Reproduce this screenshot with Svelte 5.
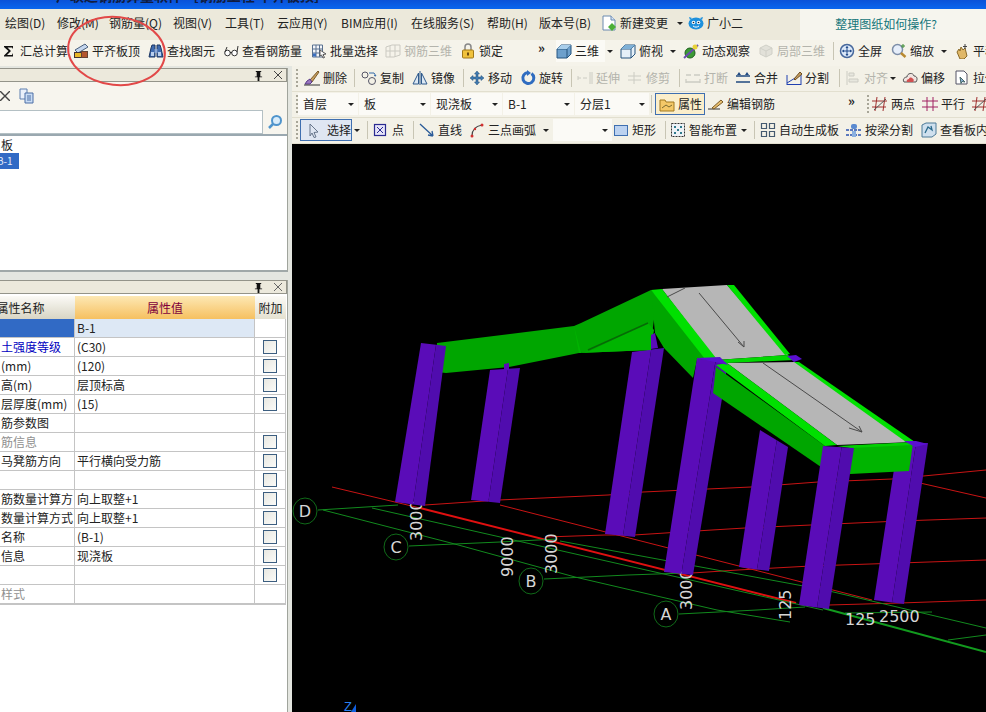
<script>
  const icons = {
    sigma: '<path d="M3 3h9v3l-1-1.500H6.500l3.500 3.500-4 4h5l1-2v3.500H3v-1l4.500-4.500L3 4z" fill="#111"/>',
    flat: '<path d="M2 7L12 1l3 3L5 10z" fill="#c4d6ee" stroke="#4a5f7c"/><rect x="1.500" y="9.500" width="7" height="5" fill="#e8b828" stroke="#433"/><rect x="8.500" y="8.500" width="6" height="6" fill="#b4562e" stroke="#643"/>',
    binoc: '<path d="M1 14l2-9 1-3h3v12H1zM9 14V2h3l1 3 2 9z" fill="#3f6bb0" stroke="#1d3763"/><rect x="6.500" y="6" width="3" height="4" fill="#8aa8d8"/><rect x="3" y="9" width="3" height="4" fill="#b9cfee"/><rect x="10" y="9" width="3" height="4" fill="#b9cfee"/>',
    glasses: '<circle cx="4.500" cy="10" r="2.800" fill="#fff" stroke="#333"/><circle cx="11.500" cy="10" r="2.800" fill="#fff" stroke="#333"/><path d="M7 9.500h2M2 9l2-5M14 9l1-6" stroke="#333" fill="none"/>',
    batch: '<path d="M1.500 2h10v12h-10zM1.500 6h10M1.500 10h10M5 2v12M8.500 2v12" fill="#f4f6fa" stroke="#58708f"/><rect x="2" y="10.500" width="3" height="3" fill="#3a6fc0"/><path d="M9 7l6 4-3 .5 1.500 3-1.500.5-1.500-3L9 13z" fill="#fff" stroke="#555"/>',
    rebar3d: '<path d="M1 4l6-2h8v10l-6 2H1zM1 8h14M5 3v11M10 2v12" fill="none" stroke="#bdbdb5"/>',
    lock: '<path d="M5 7V4a3 3 0 016 0v3" fill="none" stroke="#888" stroke-width="1.500"/><rect x="2.500" y="7" width="11" height="8" rx="1" fill="#f0c23c" stroke="#a07818"/><rect x="7" y="9.500" width="2" height="3" fill="#6a4a10"/>',
    cube: '<path d="M1 6l4-4h10v9l-4 4H1z" fill="#6da0cc" stroke="#27557f"/><path d="M1 6h10v9M11 6l4-4" fill="none" stroke="#27557f"/><path d="M1 6l4-4h10l-4 4z" fill="#a8cdea"/>',
    cubeTop: '<path d="M1 6l4-4h10v9l-4 4H1z" fill="#e6f0f8" stroke="#27557f"/><path d="M1 6h10v9M11 6l4-4" fill="none" stroke="#27557f"/><path d="M1 6l4-4h10l-4 4z" fill="#7fb0d6"/>',
    orbit: '<circle cx="7" cy="10" r="5" fill="#3c9a36" stroke="#1f5f1d"/><path d="M1 15L15 2" stroke="#6a4ab0" stroke-width="2"/><circle cx="12" cy="4" r="2.500" fill="#e8d23a"/>',
    local3d: '<path d="M8 2l6 3v6l-6 3-6-3V5z" fill="#dcdcd4" stroke="#c4c4bc"/><path d="M2 5l6 3 6-3M8 8v6" fill="none" stroke="#c4c4bc"/>',
    full: '<circle cx="8" cy="8" r="6.500" fill="#dbe8f8" stroke="#47689c" stroke-width="1.500"/><path d="M8 3.500v9M3.500 8h9" stroke="#204a8a"/><path d="M8 3l-1.500 2h3zM8 13l-1.500-2h3zM3 8l2-1.500v3zM13 8l-2-1.500v3z" fill="#204a8a"/>',
    zoom: '<circle cx="6.500" cy="6.500" r="5" fill="#e6eefa" stroke="#7d8ea8" stroke-width="1.500"/><path d="M10 10l4.500 4" stroke="#b98a30" stroke-width="2.500"/><path d="M12 1v4M10 3h4" stroke="#3a8a30"/>',
    pan: '<path d="M3 9l2-3 1 2 1-4 2 3 2-2 1 4 1 4-3 3H6z" fill="#e0b868" stroke="#8a6a28"/><path d="M11 1v5M9 3.500h4" stroke="#444"/>',
    brush: '<path d="M6 10l8-9 1 1-7 10z" fill="#c8a060" stroke="#7a5a28"/><path d="M3 11l3-2 2 3-2 2H1z" fill="#9a78c0" stroke="#5a3a88"/><path d="M0 15h16" stroke="#333"/>',
    copy: '<circle cx="4" cy="5" r="3" fill="none" stroke="#556"/><circle cx="11" cy="11" r="3.500" fill="none" stroke="#556"/><path d="M8 3h5l2 3-2-.5" fill="none" stroke="#356aa8"/>',
    mirror: '<path d="M6.500 3L1 14h5.500zM9.500 3L15 14H9.500z" fill="#dce8f4" stroke="#2f5a8c"/><path d="M8 1v14" stroke="#2f5a8c"/>',
    move: '<path d="M8 1l2.500 3H9v3h3V5.500L15 8l-3 2.500V9H9v3h1.500L8 15l-2.500-3H7V9H4v1.500L1 8l3-2.500V7h3V4H5.500z" fill="#3f7ab0" stroke="#234f78" stroke-width=".5"/>',
    rotate: '<path d="M11.500 3.500A5.500 5.500 0 118 2.500" fill="none" stroke="#2f6cc0" stroke-width="3"/><path d="M7 0l4 3-4 3z" fill="#2f6cc0"/>',
    extend: '<path d="M1 8h3M6 8h4M1 6v4M13 2v12M15 2v12" stroke="#c0c0b8" fill="none"/>',
    trim: '<path d="M1 6h13M1 10h13M7 2v12" stroke="#c0c0b8" fill="none"/>',
    breakI: '<path d="M1 5h5M9 5h6M1 12h14M1 9v4M15 9v4" stroke="#c0c0b8" fill="none" stroke-width="1.300"/>',
    merge: '<path d="M1 6h14M1 12h14" stroke="#204a80" stroke-width="1.500"/><path d="M4 2l-2 3h4zM12 2l-2 3h4z" fill="#204a80"/>',
    split: '<path d="M1 13L14 5M1 14.500h14M1 5v10M15 5v10" stroke="#2040b0" fill="none"/><path d="M8 9l6-7 2 2-7 6z" fill="#c8a060" stroke="#6a4a20"/>',
    align: '<path d="M2 1v14M4 3h5v3H4zM4 9h9v3H4z" fill="#e4e4dc" stroke="#c0c0b8"/>',
    offset: '<path d="M2 12c-2-3 1-5 3-5 0-4 6-5 7-1 3 0 4 3 2 6z" fill="#f0e4e0" stroke="#555"/><path d="M5 12c-1-2 1-3 2-3 0-2 3-2 4 0 1 0 1 2 0 3z" fill="#d05050"/>',
    stretch: '<path d="M2 1h8l3 3v10H2z" fill="#fff" stroke="#556"/><path d="M6 7l5 5-3-.5-1 2z" fill="#8ab0d8" stroke="#466"/>',
    select: '<path d="M5 2l8 8-4 .5L11 15l-2 .5L7 11l-2 3z" fill="#dfe6f2" stroke="#66758a"/>',
    point: '<rect x="1.500" y="2.500" width="11" height="11" fill="#e6e4f8" stroke="#2a2a90" stroke-width="1.200"/><path d="M4 5l6 6M10 5l-6 6" stroke="#2a2a90"/>',
    line: '<path d="M1 2l13 12M14 14l-5-1M14 14l-1-5" stroke="#2a5a98" fill="none" stroke-width="1.300"/>',
    arc: '<path d="M3 14C3 8 7 4 13 3" fill="none" stroke="#444" stroke-width="1.200"/><circle cx="3" cy="14" r="1.500" fill="#d03030"/><circle cx="13" cy="3" r="1.500" fill="#d03030"/><circle cx="6" cy="7" r="1.200" fill="#d03030"/>',
    rect: '<rect x="1.500" y="3.500" width="13" height="10" fill="#bcd2f0" stroke="#3f6fb0"/>',
    smart: '<rect x="1.500" y="1.500" width="13" height="13" fill="#eef2f6" stroke="#333" stroke-dasharray="2 1"/><path d="M4 4h2v2H4zM10 4h2v2h-2zM7 7h2v2H7zM4 10h2v2H4zM10 10h2v2h-2z" fill="#2f7a8c"/>',
    auto: '<path d="M1.500 1.500h5v5h-5zM9.500 1.500h5v5h-5zM1.500 9.500h5v5h-5zM9.500 9.500h5v5h-5z" fill="none" stroke="#445a70" stroke-width="1.200"/>',
    beam: '<path d="M0 8h16M0 13h16" stroke="#2850b0" stroke-dasharray="3 1" stroke-width="1.300"/><rect x="5" y="2" width="6" height="5" rx="2" fill="#5a8ad0"/><rect x="6" y="9" width="4" height="6" fill="#8ab0e0"/>',
    viewIn: '<path d="M1 3l4-2h10v11l-4 3H1z" fill="#cfe0ee" stroke="#4c7a98"/><path d="M4 11l3-6 4 3-1-4" fill="none" stroke="#2a6a8c" stroke-width="1.300"/>',
    prop: '<path d="M1 4h5l1 2h8v9H1z" fill="#f4c868" stroke="#a07820"/><path d="M3 12l4-3 3 2 3-2" stroke="#7a6a30" fill="none"/>',
    edit: '<path d="M0 13h12" stroke="#333"/><path d="M4 12l9-8 2 2-9 7z" fill="#e8c070" stroke="#7a5a28"/>',
    twoPt: '<path d="M5 1L3 15M13 1l-2 14M0 5h15M0 11h14" stroke="#a03030" fill="none"/><path d="M2 14L14 3" stroke="#555"/>',
    parallel: '<path d="M5 1v14M11 1v14M0 5h16M0 11h16" stroke="#a02060" fill="none"/>',
    page: '<path d="M2 1h8l4 4v10H2z" fill="#fff" stroke="#6a8ab0"/><path d="M10 1v4h4" fill="#d8e4f4" stroke="#6a8ab0"/><path d="M11 8l4 4-4 4-4-4z" fill="#4caf38"/>',
    bot: '<ellipse cx="8" cy="8.500" rx="7.500" ry="6" fill="#1e90dc"/><path d="M2 5L1 2l3 1M14 5l1-3-3 1" fill="#1e90dc"/><circle cx="5.500" cy="7.500" r="1.800" fill="#fff"/><circle cx="10.500" cy="7.500" r="1.800" fill="#fff"/><circle cx="5.500" cy="7.500" r=".8" fill="#123"/><circle cx="10.500" cy="7.500" r=".8" fill="#123"/><path d="M5 11c2 1.500 4 1.500 6 0" stroke="#fff" fill="none"/>',
    copyDoc: '<path d="M1 1h7v10H1z" fill="#eaf0fa" stroke="#5d7fb0"/><path d="M6 5h8v10H6z" fill="#c9dcf4" stroke="#4d6fa5"/><path d="M8 8h4M8 10h4M8 12h4" stroke="#4d6fa5"/>',
    search: '<circle cx="9.500" cy="6.500" r="4.500" fill="#d9ecfa" stroke="#4f94cc" stroke-width="2"/><path d="M6 10l-4 4" stroke="#4f94cc" stroke-width="2.500"/>'
  };

  const it = (x, i, t, o = {}) => ({ x, i, t, ...o });
  const sep = (x) => ({ x, sep: true });
  const arw = (x) => ({ x, arrow: true });
  const grip = (x) => ({ x, grip: true });
  const more = (x) => ({ x, more: true });
  const gap = (x) => ({ x });
  const combo = (x, t) => ({ x, t, combo: true });
  const lay = (arr, end) => arr.map((a, k) => ({ ...a, w: (arr[k + 1] ? arr[k + 1].x : end) - a.x }));

  const menu = lay([
    gap(0), it(5, null, '绘图(D)'), it(57, null, '修改(M)'), it(109, null, '钢筋量(Q)'), it(173, null, '视图(V)'),
    it(225, null, '工具(T)'), it(277, null, '云应用(Y)'), it(341, null, 'BIM应用(I)'), it(411, null, '在线服务(S)'),
    it(487, null, '帮助(H)'), it(539, null, '版本号(B)'), it(601, 'page', '新建变更'), arw(675), it(688, 'bot', '广小二'), gap(760)
  ], 800);

  const tools = lay([
    gap(0), it(1, 'sigma', '汇总计算'), it(73, 'flat', '平齐板顶'), it(148, 'binoc', '查找图元'), it(223, 'glasses', '查看钢筋量'),
    it(311, 'batch', '批量选择'), it(385, 'rebar3d', '钢筋三维', { g: 1 }), it(460, 'lock', '锁定'), more(538),
    it(556, 'cube', '三维', { w3: 1 }), arw(605), it(620, 'cubeTop', '俯视'), arw(668), it(683, 'orbit', '动态观察'),
    it(758, 'local3d', '局部三维', { g: 1 }), sep(832), it(839, 'full', '全屏'), it(891, 'zoom', '缩放'), arw(939), it(954, 'pan', '平移')
  ], 1010);

  const row1 = lay([
    gap(292), grip(295), it(304, 'brush', '删除'), sep(353), it(361, 'copy', '复制'), it(412, 'mirror', '镜像'), sep(462),
    it(469, 'move', '移动'), it(520, 'rotate', '旋转'), sep(570), it(577, 'extend', '延伸', { g: 1 }), it(627, 'trim', '修剪', { g: 1 }),
    sep(678), it(685, 'breakI', '打断', { g: 1 }), it(735, 'merge', '合并'), it(786, 'split', '分割'), sep(838),
    it(845, 'align', '对齐', { g: 1 }), arw(888), it(902, 'offset', '偏移'), it(954, 'stretch', '拉伸')
  ], 1010);

  const row2 = lay([
    gap(292), grip(295), combo(298, '首层'), combo(359, '板'), combo(431, '现浇板'), combo(503, 'B-1'), combo(575, '分层1'),
    sep(650), it(655, 'prop', '属性', { on: 'warm' }), gap(705), it(708, 'edit', '编辑钢筋'), more(848), grip(866),
    it(872, 'twoPt', '两点'), it(922, 'parallel', '平行'), it(972, 'twoPt', '')
  ], 1010);

  const row3 = lay([
    gap(292), grip(295), it(300, 'select', '选择', { on: 'cool', wide: 1 }), arw(352), sep(366), it(373, 'point', '点'), sep(412),
    it(419, 'line', '直线'), it(469, 'arc', '三点画弧'), arw(541), combo(553, ''), it(613, 'rect', '矩形'), sep(664),
    it(670, 'smart', '智能布置'), arw(739), sep(753), it(760, 'auto', '自动生成板'), it(846, 'beam', '按梁分割'), it(921, 'viewIn', '查看板内')
  ], 1010);

  const rows = [
    ['', 'B-1', 0, 'sel'], ['土强度等级', '(C30)', 1, 'blue'], ['(mm)', '(120)', 1], ['高(m)', '层顶标高', 1],
    ['层厚度(mm)', '(15)', 1], ['筋参数图', '', 0], ['筋信息', '', 1, 'gray'], ['马凳筋方向', '平行横向受力筋', 1],
    ['', '', 1], ['筋数量计算方', '向上取整+1', 1], ['数量计算方式', '向上取整+1', 1], ['名称', '(B-1)', 1],
    ['信息', '现浇板', 1], ['', '', 1], ['样式', '', 0, 'gray']
  ];

  const pts = (a) => a.map((p) => p.join(',')).join(' ');
  const mix = (a, b, k) => [a[0] + (b[0] - a[0]) * k, a[1] + (b[1] - a[1]) * k];
  const col = (tl, tr, br, bl) => ({
    a: pts([tl, mix(tl, tr, 0.6), mix(bl, br, 0.6), bl]),
    b: pts([mix(tl, tr, 0.6), tr, br, mix(bl, br, 0.6)])
  });

  const backCols = [
    col([490, 370], [520, 368], [500, 503], [471, 500]),
    col([632, 352], [664, 348], [635, 537], [605, 534]),
    col([760, 430], [788, 447], [769, 571], [739, 567])
  ];
  const col1 = col([421, 343], [446, 346], [425, 506], [395, 502]);
  const col4 = col([697, 358], [728, 362], [693, 575], [664, 572]);
  const col6 = col([823, 446], [854, 448], [829, 609], [799, 605]);
  const col7 = col([898, 443], [928, 443], [904, 604], [874, 600]);

  const redThin = [
    '425,505 499,500 608,495 643,492 751,487 818,482 892,479 986,470',
    '545,537 605,535 634,535 712,530 745,528 811,525 900,521 986,518',
    '692,573 738,570 811,566 900,563 986,560',
    '829,605 900,603 986,600',
    '332,487 420,508',
    '500,505 872,600',
    '920,483 986,498'
  ];
  const greenThin = [
    '318,510 398,505', '409,546 500,542 557,539', '544,579 628,575 686,573', '679,614 757,610 805,607',
    '845,613 932,612', '323,510 451,543 575,577 717,610 790,622', '560,541 825,590 986,628', '948,640 986,635'
  ];
  const bubbles = [[305, 511, 'D'], [396, 547, 'C'], [531, 581, 'B'], [666, 614, 'A']];
  const vert = [[422, 541, '3000'], [513, 577, '9000'], [557, 574, '3000'], [692, 610, '3000'], [791, 620, '125']];
</script>

{#snippet bar(items, cls)}
  <div class="row {cls}">
    {#each items as a}
      <div class="cell" class:wt={a.w3} style:width="{a.w}px">
        {#if a.sep}
          <span class="sep"></span>
        {:else if a.grip}
          <span class="grip"></span>
        {:else if a.arrow}
          <span class="arrow"></span>
        {:else if a.more}
          <span class="more">»</span>
        {:else if a.combo}
          <span class="combo"><span class="ctext">{a.t}</span><span class="arrow"></span></span>
        {:else if a.on}
          <span class="btn {a.on}">
            <svg class="ico" viewBox="0 0 16 16">{@html icons[a.i]}</svg><span class="lbl">{a.t}</span>
          </span>
        {:else if a.t !== undefined || a.i}
          {#if a.i}<svg class="ico" class:dim={a.g} viewBox="0 0 16 16">{@html icons[a.i]}</svg>{/if}
          <span class="lbl" class:gray={a.g}>{a.t}</span>
        {/if}
      </div>
    {/each}
  </div>
{/snippet}

<div class="app">
  <div class="title"><span class="ttext">广联达钢筋算量软件 - [钢筋工程 平齐板顶]</span></div>

  <div class="menu">
    {@render bar(menu, 'mrow')}
    <div class="promo">整理图纸如何操作?</div>
  </div>

  {@render bar(tools, 'trow')}

  <div class="body">
    <aside class="left">
      <section class="panel top">
        <header class="phead">
          <svg class="pin" viewBox="0 0 10 12"><path d="M2 1h6v1H7v5h2v1H6v4H4V8H1V7h2V2H2z" fill="#111"/></svg>
          <svg class="close" viewBox="0 0 10 10"><path d="M1 1l8 8M9 1l-8 8" stroke="#444" fill="none"/></svg>
        </header>
        <div class="ptools">
          <svg class="x" viewBox="0 0 10 10"><path d="M0 0l10 10M10 0L0 10" stroke="#444" stroke-width="1.400"/></svg>
          <svg class="ico" viewBox="0 0 16 16">{@html icons.copyDoc}</svg>
        </div>
        <div class="searchrow">
          <div class="sinput"></div>
          <div class="sbtn"><svg class="ico" viewBox="0 0 16 16">{@html icons.search}</svg></div>
        </div>
        <div class="tree">
          <div class="node">板</div>
          <div class="node picked">B-1</div>
        </div>
      </section>

      <section class="panel lower">
        <header class="phead">
          <svg class="pin" viewBox="0 0 10 12"><path d="M2 1h6v1H7v5h2v1H6v4H4V8H1V7h2V2H2z" fill="#111"/></svg>
          <svg class="close" viewBox="0 0 10 10"><path d="M1 1l8 8M9 1l-8 8" stroke="#666" fill="none"/></svg>
        </header>
        <div class="tbl">
          <div class="th t1">属性名称</div>
          <div class="th t2">属性值</div>
          <div class="th t3">附加</div>
          {#each rows as r}
            <div class="td name {r[3] || ''}">{r[0]}</div>
            <div class="td val {r[3] === 'sel' ? 'selv' : ''}">{r[1]}</div>
            <div class="td chk">{#if r[2]}<span class="box"></span>{/if}</div>
          {/each}
        </div>
      </section>
    </aside>

    <main class="right">
      {@render bar(row1, 'rrow')}
      {@render bar(row2, 'rrow')}
      {@render bar(row3, 'rrow')}
      <svg class="canvas" viewBox="292 144 694 568">
        <rect x="292" y="144" width="694" height="568" fill="#000" />
        {#each redThin as p}<polyline points={p} fill="none" stroke="#c81414" stroke-width="1" />{/each}
        <line x1="420" y1="508" x2="796" y2="603" stroke="#e01010" stroke-width="2" />
        {#each greenThin as p}<polyline points={p} fill="none" stroke="#128a1e" stroke-width="1" />{/each}
        <polyline points="372,508 823,610" fill="none" stroke="#128a1e" stroke-width="1" />
        <polyline points="823,608 986,652" fill="none" stroke="#129a1e" stroke-width="2" />
        {#each bubbles as b}
          <ellipse cx={b[0]} cy={b[1]} rx="12" ry="13" fill="none" stroke="#14851f" stroke-width=".8" />
          <text x={b[0]} y={b[1] + 6} class="lab" text-anchor="middle">{b[2]}</text>
        {/each}
        {#each vert as v}
          <text transform="translate({v[0]} {v[1]}) rotate(-90)" class="lab">{v[2]}</text>
        {/each}
        <text x="845" y="625" class="lab">125</text>
        <text x="879" y="622" class="lab">2500</text>

        {#each backCols as c}
          <polygon points={c.a} fill="#5a0cb8" /><polygon points={c.b} fill="#500cae" />
        {/each}

        <polygon points="437,343 574,326 581,323 651,290 657,297 653,327 650,350 579,353 509,367 446,373 437,372" fill="#00a600" />
        <polygon points="574,326 581,353 590,351 648,323 654,330 651,350 579,353" fill="#00b400" />
        <line x1="588" y1="350" x2="648" y2="323" stroke="#066a06" stroke-width="1.500" />
        <polygon points="504,364 509,363 509,370 504,370" fill="#5a0cb8" />
        <polygon points="651,335 655,333 658,348 651,349" fill="#5a0cb8" />
        <polygon points={col1.a} fill="#5a0cb8" /><polygon points={col1.b} fill="#500cae" />

        <polygon points="651,290 715,358 697,360 693,378 664,348 655,333" fill="#00a600" />
        <polygon points={col4.a} fill="#5a0cb8" /><polygon points={col4.b} fill="#500cae" />

        <polygon points="662,289 727,285 788,355 716,360" fill="#b6b6b6" />
        <polygon points="651,290 662,289 716,358 705,359" fill="#00e000" />
        <polygon points="727,285 734,285 790,354 785,355" fill="#00e000" />
        <line x1="699" y1="293" x2="744" y2="347" stroke="#4a4a4a" />
        <path d="M738 342l6 5 0-6" fill="none" stroke="#4a4a4a" />
        <line x1="667" y1="297" x2="685" y2="288" stroke="#4a4a4a" />

        <polygon points="716,360 788,355 795,360 727,363" fill="#00d800" />
        <polygon points="787,356 796,355 802,359 794,362" fill="#5a10d0" />

        <polygon points="727,363 797,362 913,442 837,445" fill="#b6b6b6" />
        <polygon points="713,393 716,367 825,446 821,467" fill="#00a600" />
        <polygon points="716,365 727,363 837,445 825,446" fill="#00e000" />
        <polygon points="794,362 799,362 915,442 906,442" fill="#00e000" />
        <line x1="763" y1="363" x2="862" y2="432" stroke="#4a4a4a" />
        <path d="M849 428l13 4-3-6" fill="none" stroke="#4a4a4a" />

        <polygon points={col7.a} fill="#5a0cb8" /><polygon points={col7.b} fill="#500cae" />
        <polygon points="850,446 913,443 909,471 850,474" fill="#00b400" />
        <polygon points="837,446 915,442 913,445 850,448" fill="#00d000" />
        <polygon points={col6.a} fill="#5a0cb8" /><polygon points={col6.b} fill="#500cae" />
        <polygon points="904,441 916,441 928,444 915,447" fill="#5a10d0" />
        <polygon points="697,358 720,357 728,365 715,362" fill="#5a10d0" />

        <text x="344" y="711" class="axis">Z</text>
        <polygon points="351,712 356,704 356,712" fill="#1060e0" />
      </svg>
    </main>
  </div>

  <svg class="ring" viewBox="0 0 986 712">
    <ellipse cx="116.500" cy="51" rx="48.500" ry="34" transform="rotate(6 116.500 51)" fill="none" stroke="#e24848" stroke-width="2" />
  </svg>
</div>

<style>
  :global(body) { margin: 0; background: #ece9d8; }
  .app {
    position: relative;
    width: 986px;
    height: 712px;
    overflow: hidden;
    display: flex;
    flex-direction: column;
    background: #ece9d8;
    font: 12px/16px "Noto Sans CJK SC", "Liberation Sans", sans-serif;
    color: #222;
  }
  .title {
    height: 9px;
    flex: none;
    overflow: hidden;
    background: linear-gradient(#0a52d8, #0a66ee);
    padding-left: 56px;
  }
  .ttext {
    display: block;
    margin-top: -12px;
    line-height: 14px;
    font-size: 14px;
    font-weight: 700;
    color: #101c40;
    white-space: nowrap;
  }
  .menu {
    height: 31px;
    flex: none;
    display: flex;
    background: #ece9db;
  }
  .promo {
    width: 186px;
    flex: none;
    background: #f6f5ee;
    color: #14757a;
    text-align: center;
    line-height: 29px;
    padding-right: 14px;
    box-sizing: border-box;
  }
  .row {
    display: flex;
    align-items: center;
    flex: none;
    white-space: nowrap;
    overflow: hidden;
    box-sizing: border-box;
  }
  .mrow { flex: 1; height: 31px; padding-bottom: 3px; }
  .trow { height: 26px; background: #f5f3ea; width: 986px; padding-bottom: 4px; }
  .rrow { height: 26px; background: #f3f1e7; border-bottom: 1px solid #e2dfcf; padding-bottom: 1px; }
  .cell {
    display: flex;
    align-items: center;
    gap: 3px;
    flex: none;
    height: 100%;
    min-width: 0;
  }
  .wt { background: #fbfaf5; }
  .ico { width: 16px; height: 16px; flex: none; }
  .dim { opacity: .75; }
  .lbl { flex: none; }
  .gray { color: #b4b4ac; }
  .sep { width: 1px; height: 18px; background: #c8c5b4; margin-left: 1px; }
  .grip {
    width: 2px;
    height: 18px;
    margin-left: 1px;
    background: repeating-linear-gradient(#a8a698 0 2px, transparent 2px 4px);
  }
  .arrow {
    display: block;
    width: 0;
    height: 0;
    border: 3px solid transparent;
    border-top: 3px solid #222;
    border-bottom: 0;
    margin-left: 2px;
    flex: none;
  }
  .more { font-weight: 700; font-size: 13px; margin-top: -6px; line-height: 12px; color: #222; }
  .combo {
    display: flex;
    align-items: center;
    justify-content: space-between;
    width: calc(100% - 1px);
    height: 22px;
    box-sizing: border-box;
    background: #fbfaf6;
    padding: 0 4px 0 5px;
  }
  .ctext { flex: none; }
  .btn {
    display: flex;
    align-items: center;
    gap: 3px;
    height: 22px;
    box-sizing: border-box;
    width: 100%;
    padding-left: 3px;
    border: 1px solid #3f6fb0;
  }
  .warm { background: #fbeecb; }
  .cool { background: #dfe6f2; padding-left: 4px; gap: 6px; }

  .body { flex: 1; display: flex; min-height: 0; }
  .left {
    width: 292px;
    flex: none;
    display: flex;
    flex-direction: column;
    box-sizing: border-box;
    background: #e4e6e0;
    padding-right: 4px;
  }
  .panel { display: flex; flex-direction: column; }
  .top {
    height: 204px;
    margin-top: 2px;
    background: #f7f5ee;
    border-right: 1px solid #a0a49c;
    border-bottom: 2px solid #a0a8a8;
    box-sizing: border-box;
  }
  .lower { flex: 1; margin-top: 8px; background: #fff; border-right: 1px solid #a0a49c; box-sizing: border-box; }
  .phead {
    height: 14px;
    flex: none;
    box-sizing: border-box;
    background: #ece9dc;
    border: 1px solid #94948a;
    border-left: 0;
    display: flex;
    align-items: center;
    justify-content: flex-end;
    gap: 10px;
    padding-right: 3px;
  }
  .pin { width: 9px; height: 11px; }
  .close { width: 10px; height: 10px; }
  .ptools {
    height: 28px;
    flex: none;
    display: flex;
    align-items: center;
    gap: 9px;
  }
  .x { width: 10px; height: 10px; }
  .searchrow { height: 24px; flex: none; display: flex; }
  .sinput { width: 263px; background: #fff; border: 1px solid #b4c0c4; border-left: 0; box-sizing: border-box; }
  .sbtn { flex: 1; display: flex; align-items: center; justify-content: center; }
  .tree { flex: 1; background: #fff; border-top: 2px solid #9aa8b0; padding-top: 1px; }
  .node { height: 16px; line-height: 16px; padding-left: 1px; }
  .picked {
    width: 19px;
    padding-left: 0;
    background: #316ac5;
    color: #e8eefa;
    font-size: 10px;
    overflow: hidden;
    text-indent: -3px;
    box-sizing: border-box;
  }
  .tbl {
    margin-top: 2px;
    width: 286px;
    display: grid;
    grid-template-columns: 75px 180px 31px;
    grid-template-rows: 23px;
    grid-auto-rows: 19px;
    border-bottom: 1px solid #c4c4c4;
    box-sizing: border-box;
  }
  .th { text-align: center; line-height: 23px; box-sizing: border-box; }
  .t1 { background: linear-gradient(#fbfaf6, #d8d5c4); overflow: hidden; text-indent: -34px; }
  .t2 { background: linear-gradient(#fde8b4, #f6c060); color: #80003c; }
  .t3 { background: linear-gradient(#fbfaf6, #e4e1d0); }
  .td {
    box-sizing: border-box;
    border-bottom: 1px solid #c4c4c4;
    border-right: 1px solid #c4c4c4;
    line-height: 18px;
    overflow: hidden;
    white-space: nowrap;
    padding-left: 2px;
    background: #fff;
  }
  .name { padding-left: 1px; }
  .sel { background: #316ac5; }
  .selv { background: #dde8f5; }
  .blue { color: #0000c0; }
  .name.gray { color: #909090; }
  .chk { display: flex; align-items: center; justify-content: center; padding: 0; }
  .box {
    width: 12px;
    height: 12px;
    border: 1px solid #3c5e80;
    background: linear-gradient(135deg, #e8e8e2, #fbfbf8);
  }

  .right { flex: 1; min-width: 0; display: flex; flex-direction: column; overflow: hidden; }
  .right .row { width: 694px; }
  .canvas { display: block; width: 694px; height: 568px; flex: none; }
  .lab { font: 16px "DejaVu Sans", sans-serif; fill: #d6d6d6; }
  .axis { font: 13px "Liberation Sans", sans-serif; fill: #2a80f0; }
  .ring { position: absolute; inset: 0; width: 986px; height: 712px; pointer-events: none; }
</style>
